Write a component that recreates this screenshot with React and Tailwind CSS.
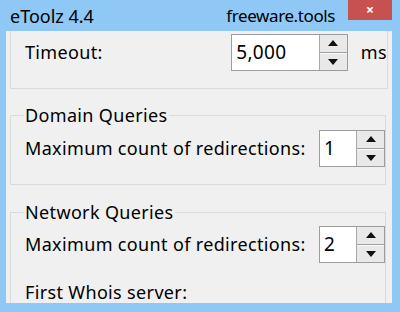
import React from "react";

const font = { fontFamily: '"Noto Sans", "Liberation Sans", sans-serif' };

function Spin({ value, width }) {
  return (
    <div className={`flex h-[37px] ${width} border border-[#9c9c9c] bg-white`}>
      <div className="flex-1 pl-[4px] text-[19px] leading-[35px] tracking-[0.3px] text-black">{value}</div>
      <div className="flex w-[28px] flex-col border-l border-[#a8a8a8] bg-[#e9e9e9]">
        <div className="flex flex-1 items-center justify-center border-b border-[#a0a0a0]">
          <svg width="10" height="6" viewBox="0 0 10 6">
            <path d="M0 6 L5 0 L10 6 Z" fill="#111" />
          </svg>
        </div>
        <div className="flex flex-1 items-center justify-center border-t border-[#fafafa]">
          <svg width="10" height="6" viewBox="0 0 10 6">
            <path d="M0 0 L10 0 L5 6 Z" fill="#111" />
          </svg>
        </div>
      </div>
    </div>
  );
}

export default function App() {
  return (
    <div className="flex h-[312px] w-[400px] flex-col bg-[#8fc8f5] text-black" style={font}>
      {/* Title bar */}
      <div className="flex h-[31px] items-start">
        <div className="pl-[10px] pt-[4px] text-[18px] leading-[24px]">eToolz 4.4</div>
        <div className="ml-auto pt-[4px] text-[17px] leading-[24px] tracking-[-0.4px]">freeware.tools</div>
        <div className="ml-[13px] mr-[8px] flex h-[20px] w-[44px] items-center justify-center bg-[#c75050] text-[14px] font-bold leading-none text-white">
          ×
        </div>
      </div>

      {/* Content */}
      <div className="mx-[6px] mr-[8px] h-[272px] overflow-hidden bg-[#f0f0f0] tracking-[0.35px]">
        {/* Timeout group (top cut off) */}
        <div className="mx-[4px] border-x border-b border-[#dadada] pb-[17px] pl-[14px] pt-[3px]">
          <div className="flex items-center text-[18px]">
            <div className="w-[207px]">Timeout:</div>
            <Spin value="5,000" width="w-[117px]" />
            <div className="ml-[13px]">ms</div>
          </div>
        </div>

        {/* Domain Queries */}
        <fieldset className="ml-[4px] mr-[8px] mt-[15px] border border-[#dadada] pb-[17px] pl-[14px]">
          <legend className="-ml-[1px] px-[1px] text-[18px] leading-[22px]">Domain Queries</legend>
          <div className="mt-[4px] flex items-center text-[18px]">
            <div className="w-[294px]">Maximum count of redirections:</div>
            <Spin value="1" width="w-[66px]" />
          </div>
        </fieldset>

        {/* Network Queries */}
        <fieldset className="ml-[4px] mr-[8px] mt-[16px] border border-[#dadada] pl-[14px] pb-[4px]">
          <legend className="-ml-[1px] px-[1px] text-[18px] leading-[22px]">Network Queries</legend>
          <div className="mt-[3px] flex items-center text-[18px]">
            <div className="w-[294px]">Maximum count of redirections:</div>
            <Spin value="2" width="w-[66px]" />
          </div>
          <div className="mt-[18px] text-[18px] leading-[22px]">First Whois server:</div>
        </fieldset>
      </div>
    </div>
  );
}
